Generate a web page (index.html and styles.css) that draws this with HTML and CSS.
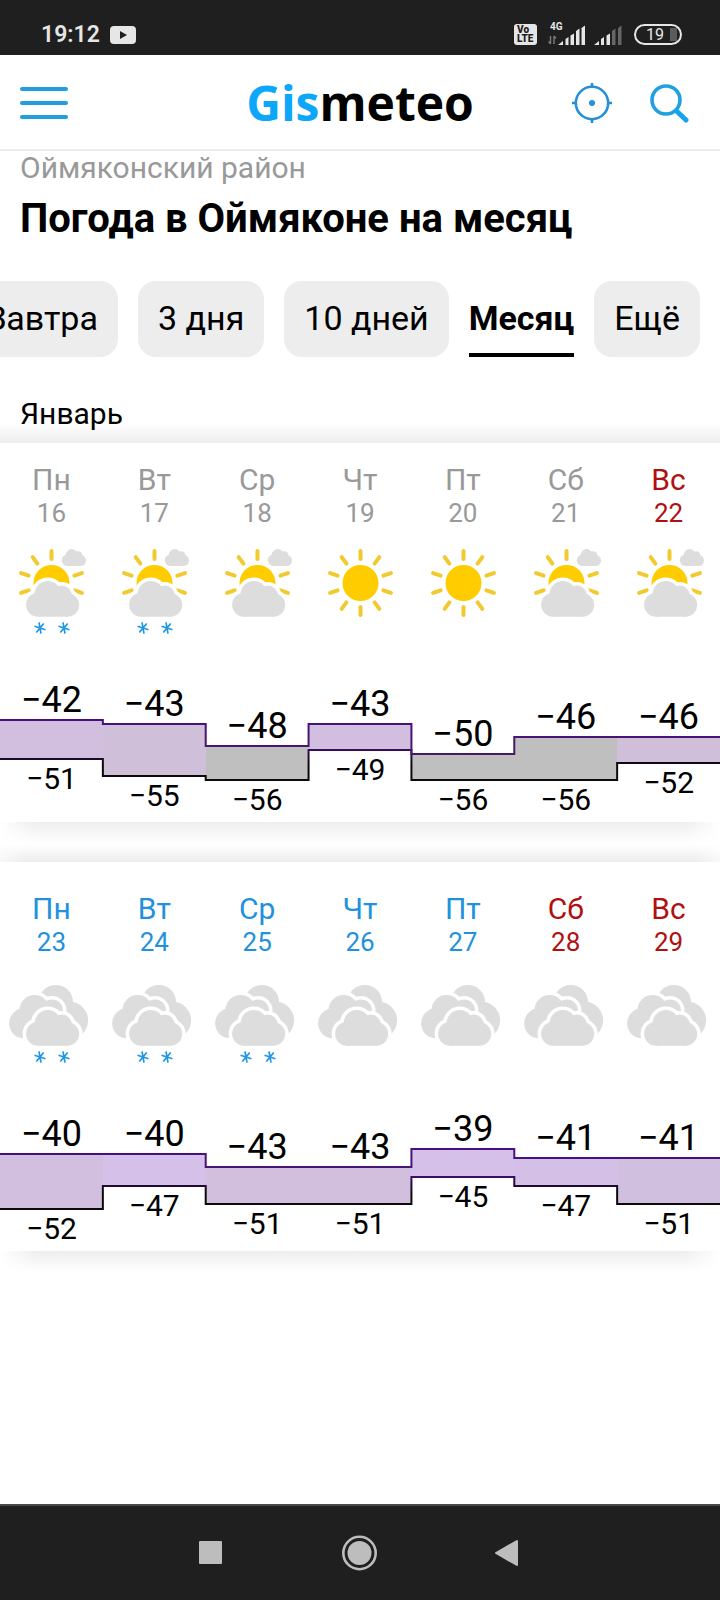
FILE: index.html
```html
<!DOCTYPE html>
<html lang="ru">
<head>
    <meta charset="UTF-8">
    <meta name="viewport" content="width=device-width, initial-scale=1.0">
    <title>Погода в Оймяконе на месяц</title>
    <link rel="stylesheet" href="styles.css">
</head>
<body>
    <!-- icon shapes used by the forecast -->
    <svg class="sprite" aria-hidden="true">
        <symbol id="cloud" viewBox="0 0 96 96" overflow="visible">
            <circle cx="34.6" cy="61.7" r="12"/>
            <circle cx="44.3" cy="51.3" r="13.3"/>
            <circle cx="58.4" cy="52.4" r="9.8"/>
            <circle cx="64" cy="62" r="11.7"/>
            <rect x="34.6" y="52" width="29.4" height="21.7"/>
        </symbol>
        <symbol id="cloudMid" viewBox="0 0 96 96" overflow="visible">
            <circle cx="20.6" cy="51.3" r="15"/>
            <circle cx="31" cy="38" r="15"/>
            <circle cx="48.5" cy="38.5" r="11"/>
            <rect x="20" y="40" width="38" height="16"/>
        </symbol>
        <symbol id="flake" viewBox="0 0 14 14">
            <path d="M6 1.3L8 12.7M1.5 5.2L12.5 8.8M3.3 11.5L10.7 2.5"/>
        </symbol>
    </svg>

    <div class="status">
        <span class="clock">19:12</span>
        <svg width="26" height="18" viewBox="0 0 26 18"><rect width="26" height="18" rx="4" fill="#e6e6e6"/><path d="M10 5l7 4-7 4z" fill="#1f1f1f"/></svg>
        <div class="status-right">
            <span class="volte"><span>Vo</span><span>LTE</span></span>
            <div class="mobile">
                <span>4G</span>
                <svg width="38" height="22" viewBox="0 0 38 22">
                    <path d="M2.5 12v8M0.5 17.5l2 2.5M6 20v-8M8 14.500l-2-2.500" stroke="#777" stroke-width="1.500" fill="none"/>
                    <path d="M10 21l5-4v4zM17.500 15l3-2v8h-3zM22.500 11.500l3.500-2V21h-3.500zM28 7l3.500-2.500V21H28zM33.500 4L37 1.500V21h-3.500z" fill="#e6e6e6"/>
                </svg>
            </div>
            <svg class="sim2" width="28" height="22" viewBox="0 0 28 22">
                <path d="M0 21l5-4v4zM7 15l3-2v8H7zM12.500 11.500l3.500-2V21h-3.500z" fill="#e6e6e6"/>
                <path d="M18 7l3.500-2.500V21H18zM24 4l3.500-2.500V21H24z" fill="#666"/>
            </svg>
            <span class="battery">19</span>
        </div>
    </div>

    <header class="header">
        <button class="icon-btn" aria-label="Меню">
            <svg width="48" height="32" viewBox="0 0 48 32"><path d="M2 2h44M2 16h44M2 30h44" stroke="#209fdc" stroke-width="4" stroke-linecap="round"/></svg>
        </button>
        <a class="logo" href="#"><span>Gis</span>meteo</a>
        <div class="header-right">
            <button class="icon-btn" aria-label="Моё местоположение">
                <svg width="40" height="40" viewBox="0 0 40 40" fill="none" stroke="#2490db" stroke-width="2.600">
                    <circle cx="20" cy="20" r="16.200"/>
                    <circle cx="20" cy="20" r="3" fill="#2490db" stroke="none"/>
                    <path d="M20 0v4M20 36v4M0 20h4M36 20h4"/>
                </svg>
            </button>
            <button class="icon-btn" aria-label="Поиск">
                <svg width="40" height="40" viewBox="0 0 40 40" fill="none" stroke="#1fa0e2">
                    <circle cx="16" cy="17" r="14" stroke-width="3.600"/>
                    <path d="M26.500 28l9.500 9" stroke="#12a4ee" stroke-width="5" stroke-linecap="round"/>
                </svg>
            </button>
        </div>
    </header>

    <main>
        <p class="place">Оймяконский район</p>
        <h1>Погода в Оймяконе на месяц</h1>
        <nav class="tabs">
            <a href="#">Завтра</a>
            <a href="#">3 дня</a>
            <a href="#">10 дней</a>
            <a href="#" class="active">Месяц</a>
            <a href="#">Ещё</a>
        </nav>
        <h2>Январь</h2>
        <div id="weeks"></div>
    </main>

    <div class="navbar">
        <button aria-label="Недавние"><svg width="36" height="36" viewBox="0 0 36 36"><rect x="6" y="6" width="23" height="23" rx="1" fill="#bdbdbd"/></svg></button>
        <button aria-label="Домой"><svg width="36" height="36" viewBox="0 0 36 36"><circle cx="17.500" cy="18" r="16.200" fill="none" stroke="#bdbdbd" stroke-width="2.600"/><circle cx="17.500" cy="18" r="12" fill="#bdbdbd"/></svg></button>
        <button aria-label="Назад"><svg width="36" height="36" viewBox="0 0 36 36"><path d="M5 18L26 6v24z" fill="#bdbdbd" stroke="#bdbdbd" stroke-width="2" stroke-linejoin="round"/></svg></button>
    </div>

    <script src="script.js"></script>
</body>
</html>
```

FILE: styles.css
```css
* { box-sizing: border-box; }
body {
    margin: 0;
    min-height: 100vh;
    display: flex;
    flex-direction: column;
    background: #fff;
    color: #000;
    font-family: Roboto, "Liberation Sans", sans-serif;
}
main { display: block; }
svg { display: block; }
button { background: none; border: none; padding: 0; cursor: pointer; }
a { color: inherit; text-decoration: none; }
.sprite { position: absolute; width: 0; height: 0; }

/* phone status bar */
.status {
    display: flex;
    align-items: center;
    height: 55px;
    padding: 14px 38px 0 41px;
    background: #1f1f1f;
    color: #e6e6e6;
}
.clock { font-size: 23px; font-weight: 600; line-height: 28px; margin-right: 10px; }
.status-right { display: flex; align-items: center; margin-left: auto; }
.volte {
    display: flex;
    flex-direction: column;
    width: 23px;
    height: 21px;
    padding: 1px 2px 0 3px;
    margin-right: 11px;
    border-radius: 3px;
    background: #e6e6e6;
    color: #1f1f1f;
    font-size: 10px;
    font-weight: 900;
    line-height: 9px;
}
.mobile { position: relative; margin-right: 8px; }
.mobile span {
    position: absolute;
    left: 2px;
    top: -2px;
    font-size: 10px;
    line-height: 10px;
    font-weight: 700;
}
.sim2 { margin-right: 12px; }
.battery {
    width: 48px;
    height: 21px;
    padding-right: 6px;
    border: 2px solid #e6e6e6;
    border-radius: 11px;
    background: linear-gradient(90deg, transparent 34px, #5c5c5c 34px) no-repeat 0 2px / 41px 13px;
    font-size: 16px;
    line-height: 18px;
    text-align: center;
}

.header {
    display: grid;
    grid-template-columns: 1fr auto 1fr;
    align-items: center;
    height: 96px;
    padding: 2px 20px 0;
    border-bottom: 2px solid #ececec;
}
.header .icon-btn { justify-self: start; }
.logo {
    font-family: "Open Sans", "Noto Sans", sans-serif;
    font-size: 48px;
    font-weight: 700;
    line-height: 60px;
}
.logo span { color: #0ca6fb; }
.header-right { display: flex; justify-content: flex-end; gap: 38px; margin-right: 10px; }

.place {
    margin: 0;
    padding: 1px 20px 0;
    color: #999;
    font-size: 30px;
    line-height: 32px;
}
h1 { margin: 11px 20px 0; font-size: 40px; font-weight: 700; line-height: 48px; }
.tabs {
    display: flex;
    justify-content: flex-end;
    gap: 20px;
    margin-top: 38px;
    padding: 0 20px;
    overflow: hidden;
    font-size: 34px;
    line-height: 74px;
    white-space: nowrap;
}
.tabs a { height: 76px; padding: 0 20px; border-radius: 18px; background: #ededed; }
.tabs a.active {
    padding: 0;
    border-radius: 0;
    border-bottom: 4px solid #000;
    background: none;
    font-weight: 700;
}
h2 {
    margin: 37px 0 0;
    padding: 0 20px 9px;
    font-size: 30px;
    font-weight: 400;
    line-height: 40px;
    background: linear-gradient(0deg, #ededed, #fff 20px);
}

/* week cards */
.week { position: relative; padding: 20px 0 2px; background: #fff; }
.week + .week { margin-top: 40px; padding-top: 30px; }
.week::after, .week + .week::before {
    content: "";
    position: absolute;
    left: 0;
    right: 0;
    height: 22px;
    -webkit-mask: linear-gradient(90deg, transparent, #000 35px, #000 calc(100% - 35px), transparent);
    mask: linear-gradient(90deg, transparent, #000 35px, #000 calc(100% - 35px), transparent);
}
.week::after { top: 100%; background: linear-gradient(#eee, #fafafa 15px, #fff); }
.week + .week::before {
    bottom: 100%;
    height: 18px;
    background: linear-gradient(#fff, #ededed);
    -webkit-mask: linear-gradient(90deg, #0006, #000 24px, #000 calc(100% - 24px), #0006);
    mask: linear-gradient(90deg, #0006, #000 24px, #000 calc(100% - 24px), #0006);
}
.days { display: grid; grid-template-columns: repeat(7, 1fr); text-align: center; }
.day { color: #1f91dd; }
.day.past { color: #999; }
.day.weekend { color: #b01010; }
.name { font-size: 30px; line-height: 34px; }
.date { font-size: 26px; line-height: 32px; }
.weather { width: 96px; height: 96px; margin: 14px auto 41px; }
.cloud { fill: #ddd; }
.halo { fill: #fff; stroke: #fff; stroke-width: 7; }
.ray { stroke: #f2ca30; stroke-width: 4; stroke-linecap: round; }
.flake { stroke: #2196e3; stroke-width: 1.7; fill: none; }

.chart { position: relative; }
.max { font-size: 36px; line-height: 40px; }
.min { font-size: 30px; line-height: 40px; }
.lines {
    position: absolute;
    left: 0;
    top: 40px;
    width: 100%;
    height: 60px;
    overflow: visible;
    fill: none;
    stroke-width: 2;
}
.lines path { vector-effect: non-scaling-stroke; }

.navbar {
    display: flex;
    justify-content: center;
    align-items: center;
    height: 96px;
    margin-top: auto;
    border-top: 2px solid #4a4a4a;
    background: #1f1f1f;
}
.navbar button { width: 149px; display: flex; justify-content: center; }
```

FILE: script.js
```js
const names = ["Пн", "Вт", "Ср", "Чт", "Пт", "Сб", "Вс"];
const CHART_HEIGHT = 60;

// [date, class, icon, max, min, bar color]
const weeks = [
    [
        [16, "past", "sunCloudSnow", 42, 51, "#d2bfe0"],
        [17, "past", "sunCloudSnow", 43, 55, "#d0bfd9"],
        [18, "past", "sunCloud", 48, 56, "#bfbfbf"],
        [19, "past", "sun", 43, 49, "#d2bfe0"],
        [20, "past", "sun", 50, 56, "#bfbfbf"],
        [21, "past", "sunCloud", 46, 56, "#bfbfbf"],
        [22, "weekend", "sunCloud", 46, 52, "#d0bfd9"]
    ],
    [
        [23, "", "cloudsSnow", 40, 52, "#d2bfe0"],
        [24, "", "cloudsSnow", 40, 47, "#d4c0e8"],
        [25, "", "cloudsSnow", 43, 51, "#d1bfdd"],
        [26, "", "clouds", 43, 51, "#d1bfdd"],
        [27, "", "clouds", 39, 45, "#d4c0e8"],
        [28, "weekend", "clouds", 41, 47, "#d4c0e6"],
        [29, "weekend", "clouds", 41, 51, "#d1bfdf"]
    ]
];

function rays(angles) {
    return angles.map(a => `<path class="ray" d="M48 16v-8" transform="rotate(${a} 48 40)"/>`).join("");
}

const disc = '<circle cx="48" cy="40" r="18" fill="#fc0"/>';
const frontCloud = '<use href="#cloud" class="halo"/><use href="#cloud" class="cloud"/>';
const snow = '<use href="#flake" class="flake" x="29.500" y="78" width="14" height="14"/><use href="#flake" class="flake" x="53.500" y="78" width="14" height="14"/>';
const sunCloud = rays([0, -36, -72, -108, 72, 108]) + disc + frontCloud +
    '<use href="#cloud" class="cloud" transform="translate(48 -12) scale(0.455 0.475)"/>';
const clouds = '<circle class="cloud" cx="52.300" cy="30.300" r="17.300"/><circle class="cloud" cx="66" cy="48.300" r="18.600"/>' +
    '<use href="#cloudMid" class="halo"/><use href="#cloudMid" class="cloud"/>' + frontCloud;

const icons = {
    sun: rays([0, 36, 72, 108, 144, 180, 216, 252, 288, 324]) + disc,
    sunCloud: sunCloud,
    sunCloudSnow: sunCloud + snow,
    clouds: clouds,
    cloudsSnow: clouds + snow
};

function stepPath(values, y) {
    return values.map((v, i) => (i ? "V" : "M0 ") + y(v) + "H" + (i + 1) * 100).join("");
}

weeks.forEach((days, n) => {
    const top = Math.min(...days.map(d => d[3]));
    const bottom = Math.max(...days.map(d => d[4]));
    const y = t => Math.round((t - top) * CHART_HEIGHT / (bottom - top));

    const head = days.map((d, i) => `
        <div class="day ${d[1]}">
            <div class="name">${names[i]}</div>
            <div class="date">${d[0]}</div>
            <svg class="weather" viewBox="-0.5 0 96 96">${icons[d[2]]}</svg>
        </div>`).join("");

    const bars = days.map(d => `
        <div style="padding-top: ${y(d[3])}px">
            <div class="max">−${d[3]}</div>
            <div style="height: ${y(d[4]) - y(d[3])}px; background: ${d[5]}"></div>
            <div class="min">−${d[4]}</div>
        </div>`).join("");

    const week = document.createElement("section");
    week.className = "week";
    week.innerHTML = `
        <div class="days">${head}</div>
        <div class="chart">
            <div class="days">${bars}</div>
            <svg class="lines" viewBox="0 0 700 60" preserveAspectRatio="none">
                <defs>
                    <linearGradient id="max${n}" gradientUnits="userSpaceOnUse" x1="0" y1="0" x2="0" y2="60">
                        <stop offset="0" stop-color="#470f82"/><stop offset="1" stop-color="#4a2058"/>
                    </linearGradient>
                    <linearGradient id="min${n}" gradientUnits="userSpaceOnUse" x1="0" y1="28" x2="0" y2="44">
                        <stop offset="0" stop-color="#3c0c66"/><stop offset="1" stop-color="#0a0a0a"/>
                    </linearGradient>
                </defs>
                <path stroke="url(#min${n})" d="${stepPath(days.map(d => d[4]), y)}"/>
                <path stroke="url(#max${n})" d="${stepPath(days.map(d => d[3]), y)}"/>
            </svg>
        </div>`;
    document.getElementById("weeks").appendChild(week);
});
```
